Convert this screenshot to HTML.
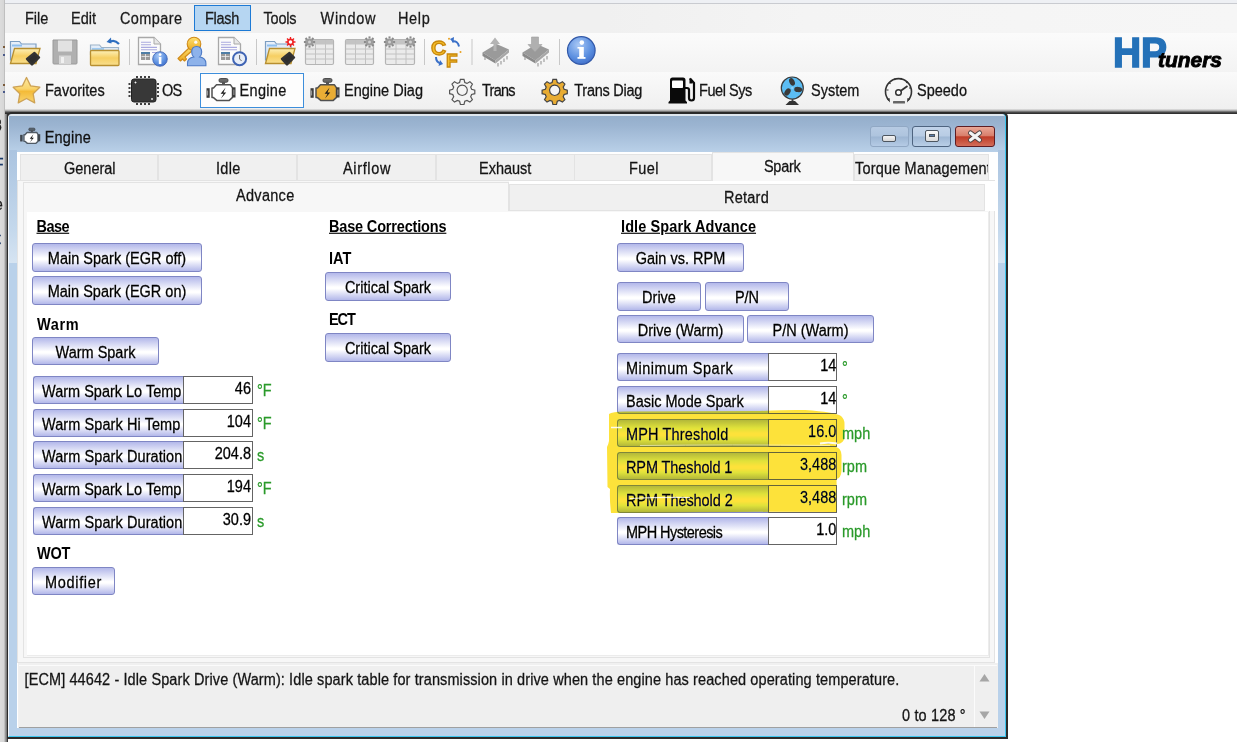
<!DOCTYPE html>
<html><head><meta charset="utf-8">
<style>
*{box-sizing:border-box;margin:0;padding:0}
html,body{width:1237px;height:742px;overflow:hidden;background:#fff;font-family:"Liberation Sans",sans-serif;font-size:14.5px;color:#000}
.t,.bt{-webkit-text-stroke:0.25px currentColor;transform:scaleY(1.12);transform-origin:50% 49%}
.b{-webkit-text-stroke:0}
.a{position:absolute}
.t{position:absolute;white-space:nowrap;line-height:1}
#leftstrip{left:0;top:0;width:8px;height:742px;background:linear-gradient(90deg,#dcdcdc 0,#d6d6d6 4px,#a8a8a8 5px,#7a7a7a 6.5px,#3a3a3a 7.5px,#2a2a2a 8px)}
#topstrip{left:5px;top:0;width:1232px;height:4px;background:#eef0f4;border-bottom:1px solid #c9cbd0}
#menubar{left:5px;top:4px;width:1232px;height:29px;background:linear-gradient(90deg,#f0f0f0 0,#f0f0f0 600px,#f4f4f4 800px,#f6f6f6 1232px)}
#tb1{left:5px;top:33px;width:1232px;height:39px;background:linear-gradient(#fbfbfb,#f3f3f3)}
#tb2{left:5px;top:72px;width:1232px;height:39px;background:linear-gradient(#fafafa,#efefef)}
#shadow{left:5px;top:109px;width:1232px;height:5px;background:linear-gradient(#e8e8e8,#b0b0b0 30%,#5a5a5a 60%,#333 80%,#2e2e2e)}
.menu{top:10.8px;font-size:14.5px;color:#1a1a1a}
.b{font-weight:bold}
.u{text-decoration:underline}
/* window */
#win{left:7px;top:112px;width:1001px;height:627px;background:#2a2a2a;border-radius:5px 5px 0 0}
#frame{left:8px;top:114px;width:998px;height:623px;border-radius:4px 4px 0 0;background:#b9d1ea;border-left:1px solid #f4f8fc;border-right:1px solid #3cc6ef;border-bottom:1px solid #3cc6ef}
#title{left:9px;top:114px;width:996px;height:38px;border-radius:4px 4px 0 0;background:linear-gradient(#dfe7ef 0,#dfe7ef 1.5px,#94aecb 2px,#9bb4d1 30%,#b9d0e8 100%)}
.btn{position:absolute;border:1px solid #7f86c4;border-radius:3px;background:linear-gradient(#b3b8ea 0%,#fff 52%,#fff 58%,#b3b8ea 100%);text-align:center;line-height:26px;white-space:nowrap}
.tab{background:#f0f0f0;border:1px solid #e3e3e3;border-bottom:none}
.tabt{color:#141414}
.bt{position:absolute;left:0;right:0;white-space:nowrap;line-height:1}
.row{position:absolute;height:28px}
.row .lab{position:absolute;left:0;top:0;height:28px;border:1px solid #7f86c4;border-right:none;border-radius:3px 0 0 3px;background:linear-gradient(#b3b8ea 0%,#fff 52%,#fff 58%,#b3b8ea 100%);line-height:26px;padding-left:8px;white-space:nowrap;overflow:hidden}
.row .val{position:absolute;top:0;height:28px;border:1px solid #646464;background:#fff;text-align:right;padding-right:3px;line-height:22px}
.unit{color:#2a9a2a}
.tbt{color:#141414}
</style></head><body>
<div id="leftstrip" class="a"></div>
<div id="topstrip" class="a"></div>
<div id="menubar" class="a"></div>
<div id="tb1" class="a"></div>
<div id="tb2" class="a"></div>
<div id="shadow" class="a"></div>

<!-- ICONS -->
<svg class="a" style="left:0;top:0" width="1237" height="112" viewBox="0 0 1237 112">
<defs>
<linearGradient id="fy" x1="0" y1="0" x2="0" y2="1"><stop offset="0" stop-color="#fdf0b8"/><stop offset="0.5" stop-color="#f6cf62"/><stop offset="1" stop-color="#f9df8e"/></linearGradient>
<linearGradient id="fb" x1="0" y1="0" x2="0" y2="1"><stop offset="0" stop-color="#e9f1fb"/><stop offset="1" stop-color="#c7daf0"/></linearGradient>
<radialGradient id="ib" cx="0.4" cy="0.3" r="0.8"><stop offset="0" stop-color="#a9c8f5"/><stop offset="0.6" stop-color="#5b8fe0"/><stop offset="1" stop-color="#3c68c4"/></radialGradient>
<linearGradient id="gk" x1="0" y1="0" x2="0" y2="1"><stop offset="0" stop-color="#fde070"/><stop offset="1" stop-color="#eaa820"/></linearGradient>
<linearGradient id="star" x1="0" y1="0" x2="0" y2="1"><stop offset="0" stop-color="#fde9a0"/><stop offset="0.45" stop-color="#f9d36a"/><stop offset="0.55" stop-color="#f4bb38"/><stop offset="1" stop-color="#f8d470"/></linearGradient>
</defs>
<!-- open folder -->
<path d="M10.5 41.5 h9 l2 2.5 h14.5 v16 h-25.5z" fill="url(#fb)" stroke="#7d9ec2" stroke-width="1.2"/>
<rect x="12" y="44.5" width="10" height="2" fill="#8fc0f0"/>
<path d="M10.5 63.5 L14.5 48.5 H40 L36 63.5 Z" fill="url(#fy)" stroke="#b78f30" stroke-width="1.3"/>
<path d="M27 59 L34.5 53 L39 57.5 L32 64.5 Z" fill="#2e2e2e" stroke="#333" stroke-width="2.4" stroke-linejoin="round"/>
<!-- floppy -->
<path d="M53 40 h24 v23 q0 1 -1 1 h-22 q-1 0 -1 -1 z" fill="#b0b0b0" stroke="#9a9a9a"/>
<rect x="58" y="40.5" width="14" height="11" fill="#e2e2e2"/>
<rect x="59" y="55.5" width="12" height="8.5" fill="#d6d6d6"/>
<rect x="61" y="57" width="3" height="6" fill="#f0f0f0"/>
<!-- folder up -->
<path d="M90.5 45 h9 l2 2.5 h17 v7 h-28z" fill="url(#fb)" stroke="#9bb2c8" stroke-width="1.2"/>
<rect x="92" y="48" width="12" height="2" fill="#9fcaf2"/>
<rect x="90.5" y="50.5" width="28.5" height="15" rx="1" fill="url(#fy)" stroke="#b78f30" stroke-width="1.3"/>
<path d="M109 42.5 q5 -4 10 1.5" fill="none" stroke="#2f6fc0" stroke-width="2.2"/>
<path d="M106.5 42 l4.5 -4.5 l0.5 6z" fill="#2f6fc0"/>
<!-- sep -->
<rect x="129" y="39" width="1" height="26" fill="#c8c8c8"/>
<!-- doc info -->
<path d="M138.5 37.5 h15.5 l6.5 6.5 v20.5 h-22z" fill="#fbfbfb" stroke="#a8a8a8" stroke-width="1.3"/>
<path d="M154 37.5 v6.5 h6.5" fill="#e8e8e8" stroke="#a8a8a8" stroke-width="1"/>
<g stroke="#aaaae0" stroke-width="1.1"><path d="M141 42.3h10M141 44.7h10M141 47.4h16M141 49.7h16M152 52.5h5"/></g>
<rect x="141" y="52" width="9" height="8" fill="#9a9a9a"/><rect x="141" y="52" width="9" height="2" fill="#4f7ea6"/>
<path d="M141.5 56.5h8M145.5 54v6" stroke="#eee" stroke-width="0.8"/>
<circle cx="160" cy="59" r="7.3" fill="url(#ib)" stroke="#3b60b0" stroke-width="0.8"/>
<rect x="158.8" y="57" width="2.6" height="7" fill="#fff"/><circle cx="160.1" cy="54.6" r="1.4" fill="#fff"/>
<!-- key user -->
<path d="M189.5 47.5 L178 58.5 L180.5 61 L182.5 59 L184.5 61 L186.5 59 L185 57 L193 50" fill="url(#gk)" stroke="#d08a18" stroke-width="1.1" stroke-linejoin="round"/>
<circle cx="194" cy="44" r="6.8" fill="url(#gk)" stroke="#d08a18" stroke-width="1.1"/>
<circle cx="195.8" cy="42.2" r="1.6" fill="#f8f8f8"/>
<path d="M196.5 46.5 c-3.2 0 -4.8 2.6 -4.8 5.6 c0 2.2 0.8 3.8 2 4.8 c-4 0.8 -6.2 3 -6.2 6.6 v2.2 h18.4 v-2.2 c0 -3.6 -2.2 -5.8 -6.2 -6.6 c1.2 -1 2 -2.6 2 -4.8 c0 -3 -1.6 -5.6 -5.2 -5.6z" fill="#8db2ea" stroke="#4c7ac6" stroke-width="1.1"/>
<!-- doc clock -->
<path d="M218.5 37.5 h15.5 l6.5 6.5 v20.5 h-22z" fill="#fbfbfb" stroke="#a8a8a8" stroke-width="1.3"/>
<path d="M234 37.5 v6.5 h6.5" fill="#e8e8e8" stroke="#a8a8a8" stroke-width="1"/>
<g stroke="#aaaae0" stroke-width="1.1"><path d="M221 42.3h10M221 44.7h10M221 47.4h16M221 49.7h16"/></g>
<rect x="221" y="52" width="9" height="8" fill="#9a9a9a"/><rect x="221" y="52" width="9" height="2" fill="#4f7ea6"/>
<path d="M221.5 56.5h8M225.5 54v6" stroke="#eee" stroke-width="0.8"/>
<circle cx="239.6" cy="58.7" r="6.5" fill="#e8eef8" stroke="#3f64b4" stroke-width="2"/>
<path d="M239.6 55 v4 l2 2" stroke="#555" stroke-width="0.9" fill="none"/>
<!-- sep -->
<rect x="256" y="39" width="1" height="26" fill="#c8c8c8"/>
<!-- folder open red -->
<path d="M265.5 41.5 h9 l2 2.5 h14.5 v16 h-25.5z" fill="url(#fb)" stroke="#7d9ec2" stroke-width="1.2"/>
<rect x="267" y="44.5" width="10" height="2" fill="#8fc0f0"/>
<path d="M265.5 63.5 L269.5 48.5 H295 L291 63.5 Z" fill="url(#fy)" stroke="#b78f30" stroke-width="1.3"/>
<path d="M282 59 L289.5 53 L294 57.5 L287 64.5 Z" fill="#2e2e2e" stroke="#333" stroke-width="2.4" stroke-linejoin="round"/>
<path d="M290.5 37 v10 M285.5 42 h10 M287 38.5 l7 7 M294 38.5 l-7 7" stroke="#f02020" stroke-width="1.3"/>
<circle cx="290.5" cy="42" r="2.6" fill="#fff" stroke="#f02020" stroke-width="1.6"/>
<!-- tables -->
<g fill="#ebebeb" stroke="#b4b4b4" stroke-width="1.2">
<rect x="305.5" y="39.5" width="28" height="25" rx="1.5"/>
<rect x="345.5" y="39.5" width="28" height="25" rx="1.5"/>
<rect x="385.5" y="39.5" width="29" height="25" rx="1.5"/>
</g>
<g fill="#c4c4c4"><rect x="306" y="40" width="27" height="4.5"/><rect x="346" y="40" width="27" height="4.5"/><rect x="386" y="40" width="28" height="4.5"/></g>
<g stroke="#c2c2c2" stroke-width="1"><path d="M306 49h27M306 54h27M306 59h27M315.5 40v24M325.5 40v24"/><path d="M346 49h27M346 54h27M346 59h27M355.5 40v24M365.5 40v24"/><path d="M386 49h28M386 54h28M386 59h28M396 40v24M406 40v24"/></g>
<circle cx="309.5" cy="42" r="3.6" fill="#9c9c9c"/><rect x="313.10" y="41.00" width="2" height="2" fill="#8a8a8a" transform="rotate(0 314.10 42.00)"/><rect x="311.75" y="44.25" width="2" height="2" fill="#8a8a8a" transform="rotate(45 312.75 45.25)"/><rect x="308.50" y="45.60" width="2" height="2" fill="#8a8a8a" transform="rotate(90 309.50 46.60)"/><rect x="305.25" y="44.25" width="2" height="2" fill="#8a8a8a" transform="rotate(135 306.25 45.25)"/><rect x="303.90" y="41.00" width="2" height="2" fill="#8a8a8a" transform="rotate(180 304.90 42.00)"/><rect x="305.25" y="37.75" width="2" height="2" fill="#8a8a8a" transform="rotate(225 306.25 38.75)"/><rect x="308.50" y="36.40" width="2" height="2" fill="#8a8a8a" transform="rotate(270 309.50 37.40)"/><rect x="311.75" y="37.75" width="2" height="2" fill="#8a8a8a" transform="rotate(315 312.75 38.75)"/><circle cx="309.5" cy="42" r="1.5" fill="#d0d0d0"/><circle cx="369.5" cy="42" r="3.6" fill="#9c9c9c"/><rect x="373.10" y="41.00" width="2" height="2" fill="#8a8a8a" transform="rotate(0 374.10 42.00)"/><rect x="371.75" y="44.25" width="2" height="2" fill="#8a8a8a" transform="rotate(45 372.75 45.25)"/><rect x="368.50" y="45.60" width="2" height="2" fill="#8a8a8a" transform="rotate(90 369.50 46.60)"/><rect x="365.25" y="44.25" width="2" height="2" fill="#8a8a8a" transform="rotate(135 366.25 45.25)"/><rect x="363.90" y="41.00" width="2" height="2" fill="#8a8a8a" transform="rotate(180 364.90 42.00)"/><rect x="365.25" y="37.75" width="2" height="2" fill="#8a8a8a" transform="rotate(225 366.25 38.75)"/><rect x="368.50" y="36.40" width="2" height="2" fill="#8a8a8a" transform="rotate(270 369.50 37.40)"/><rect x="371.75" y="37.75" width="2" height="2" fill="#8a8a8a" transform="rotate(315 372.75 38.75)"/><circle cx="369.5" cy="42" r="1.5" fill="#d0d0d0"/><circle cx="389.5" cy="42" r="3.6" fill="#9c9c9c"/><rect x="393.10" y="41.00" width="2" height="2" fill="#8a8a8a" transform="rotate(0 394.10 42.00)"/><rect x="391.75" y="44.25" width="2" height="2" fill="#8a8a8a" transform="rotate(45 392.75 45.25)"/><rect x="388.50" y="45.60" width="2" height="2" fill="#8a8a8a" transform="rotate(90 389.50 46.60)"/><rect x="385.25" y="44.25" width="2" height="2" fill="#8a8a8a" transform="rotate(135 386.25 45.25)"/><rect x="383.90" y="41.00" width="2" height="2" fill="#8a8a8a" transform="rotate(180 384.90 42.00)"/><rect x="385.25" y="37.75" width="2" height="2" fill="#8a8a8a" transform="rotate(225 386.25 38.75)"/><rect x="388.50" y="36.40" width="2" height="2" fill="#8a8a8a" transform="rotate(270 389.50 37.40)"/><rect x="391.75" y="37.75" width="2" height="2" fill="#8a8a8a" transform="rotate(315 392.75 38.75)"/><circle cx="389.5" cy="42" r="1.5" fill="#d0d0d0"/><circle cx="410.5" cy="42" r="3.6" fill="#9c9c9c"/><rect x="414.10" y="41.00" width="2" height="2" fill="#8a8a8a" transform="rotate(0 415.10 42.00)"/><rect x="412.75" y="44.25" width="2" height="2" fill="#8a8a8a" transform="rotate(45 413.75 45.25)"/><rect x="409.50" y="45.60" width="2" height="2" fill="#8a8a8a" transform="rotate(90 410.50 46.60)"/><rect x="406.25" y="44.25" width="2" height="2" fill="#8a8a8a" transform="rotate(135 407.25 45.25)"/><rect x="404.90" y="41.00" width="2" height="2" fill="#8a8a8a" transform="rotate(180 405.90 42.00)"/><rect x="406.25" y="37.75" width="2" height="2" fill="#8a8a8a" transform="rotate(225 407.25 38.75)"/><rect x="409.50" y="36.40" width="2" height="2" fill="#8a8a8a" transform="rotate(270 410.50 37.40)"/><rect x="412.75" y="37.75" width="2" height="2" fill="#8a8a8a" transform="rotate(315 413.75 38.75)"/><circle cx="410.5" cy="42" r="1.5" fill="#d0d0d0"/>
<!-- sep -->
<rect x="424" y="39" width="1" height="26" fill="#c8c8c8"/>
<!-- C/F -->
<text x="431" y="55" font-family="Liberation Sans" font-weight="bold" font-size="21" fill="#f5bd2a" stroke="#c8880c" stroke-width="1.3">C</text>
<text x="446" y="67" font-family="Liberation Sans" font-weight="bold" font-size="19" fill="#f5bd2a" stroke="#c8880c" stroke-width="1.3">F</text>
<path d="M452 41.5 q6 -1 7 5" fill="none" stroke="#3a70c8" stroke-width="2"/><path d="M450 39 l4 -2 l-0.5 6z" fill="#3a70c8"/>
<path d="M436 57 q0 5 4.5 6.5" fill="none" stroke="#3a70c8" stroke-width="2"/><path d="M440 60 l3 4 l-4.5 2z" fill="#3a70c8"/>
<circle cx="449" cy="38.8" r="1" fill="#e8a020"/><circle cx="460.5" cy="52" r="1" fill="#e8a020"/>
<!-- sep -->
<rect x="471.5" y="39" width="1" height="26" fill="#c8c8c8"/>
<!-- chips -->
<g id="chipA">
<path d="M482.5 52.5 L496.5 44 L509 49.5 L495.5 60.5 Z" fill="#9a9a9a"/>
<path d="M482.5 52.5 L482.5 56 L495.5 63.5 L495.5 60.5 Z" fill="#8a8a8a"/>
<path d="M495.5 60.5 L495.5 63.5 L509 52.5 L509 49.5 Z" fill="#a6a6a6"/>
<g stroke="#a0a0a0" stroke-width="1.2"><path d="M485 57 v3 M498 63 l0 3.5 M501 61 v3.5 M504 58.5 v3.5 M507 56 v3.5"/></g>
</g>
<path d="M493.5 51 v-7 h-3.5 l5 -6.5 l5 6.5 h-3.5 v7z" fill="#b4b4b4"/>
<g>
<path d="M522.5 52.5 L536.5 44 L549 49.5 L535.5 60.5 Z" fill="#9a9a9a"/>
<path d="M522.5 52.5 L522.5 56 L535.5 63.5 L535.5 60.5 Z" fill="#8a8a8a"/>
<path d="M535.5 60.5 L535.5 63.5 L549 52.5 L549 49.5 Z" fill="#a6a6a6"/>
<g stroke="#a0a0a0" stroke-width="1.2"><path d="M525 57 v3 M538 63 l0 3.5 M541 61 v3.5 M544 58.5 v3.5 M547 56 v3.5"/></g>
</g>
<path d="M531.5 37 h7 v7.5 h3.5 l-7 7.5 l-7 -7.5 h3.5z" fill="#b0b0b0" stroke="#a0a0a0" stroke-width="0.6"/>
<!-- sep -->
<rect x="559" y="39" width="1" height="26" fill="#c8c8c8"/>
<!-- info -->
<circle cx="581.3" cy="50.5" r="13.8" fill="url(#ib)" stroke="#3158a8" stroke-width="1.2"/>
<rect x="579.2" y="47" width="4.6" height="11" fill="#fff"/><rect x="577.5" y="57" width="8" height="1.8" fill="#fff"/><rect x="577.5" y="47" width="3.5" height="1.6" fill="#fff"/>
<circle cx="581.8" cy="42.6" r="2.3" fill="#fff"/>
<!-- HPtuners -->
<text x="1113" y="67" font-family="Liberation Sans" font-weight="bold" font-size="42" fill="#2471b8" stroke="#2471b8" stroke-width="1.6" textLength="54" lengthAdjust="spacingAndGlyphs">HP</text>
<text x="1158" y="67" font-family="Liberation Sans" font-weight="bold" font-style="italic" font-size="21" fill="#000" stroke="#000" stroke-width="0.9" textLength="64" lengthAdjust="spacingAndGlyphs">tuners</text>

<!-- toolbar 2 -->
<rect x="200.5" y="73.5" width="103" height="34" fill="#fdfdfd" stroke="#3d8edb" stroke-width="1"/>
<path d="M26.50 77.50 L30.61 85.84 L39.81 87.17 L33.16 93.66 L34.73 102.83 L26.50 98.50 L18.27 102.83 L19.84 93.66 L13.19 87.17 L22.39 85.84Z" fill="url(#star)" stroke="#cda255" stroke-width="1.3" stroke-linejoin="round"/>
<!-- chip -->
<rect x="131.5" y="79" width="24.5" height="23" rx="2.5" fill="#383838" stroke="#202020"/>
<g fill="#404040"><rect x="136" y="76" width="2" height="2"/><rect x="140" y="76" width="2" height="2"/><rect x="144" y="76" width="2" height="2"/><rect x="148" y="76" width="2" height="2"/>
<rect x="136" y="103" width="2" height="2"/><rect x="140" y="103" width="2" height="2"/><rect x="144" y="103" width="2" height="2"/><rect x="148" y="103" width="2" height="2"/>
<rect x="128.5" y="83" width="2" height="2"/><rect x="128.5" y="87" width="2" height="2"/><rect x="128.5" y="91" width="2" height="2"/><rect x="128.5" y="95" width="2" height="2"/>
<rect x="157" y="83" width="2" height="2"/><rect x="157" y="87" width="2" height="2"/><rect x="157" y="91" width="2" height="2"/><rect x="157" y="95" width="2" height="2"/></g>
<path d="M134.5 82.5 l2 0 M135.5 81.5 v2 M151 99 h2 M152 98 v2" stroke="#fff" stroke-width="0.8"/>
<!-- engine icons -->
<g transform="translate(0,0)">
<rect x="219" y="78.5" width="9" height="3.8" rx="1.6" fill="#6a6a6a" stroke="#444" stroke-width="0.9"/>
<rect x="222" y="82" width="3" height="3" fill="#555"/>
<path d="M216.5 84.8 h14 l2 3 v9.6 l-3.5 3.2 h-12 l-3.5 -3 h-1.5 v-9.6 h1.5z" fill="#ffffff" stroke="#505050" stroke-width="1.5" stroke-linejoin="round"/>
<path d="M206.5 88.2 h3.2 v9.6 h-3.2z" fill="#3a3a3a"/><path d="M207.6 90.5 v5" stroke="#bbb" stroke-width="0.8"/>
<path d="M232.3 87.3 h3.2 v10.2 h-3.2z" fill="#3a3a3a"/><path d="M233.9 89.5 v5.5" stroke="#bbb" stroke-width="0.8"/>
<path d="M225.6 87.6 l-5 6.2 h3 l-2.6 4.8 l5.2 -6.1 h-2.8z" fill="#1a1a1a"/>
</g>
<g transform="translate(104,0)">
<rect x="219" y="78.5" width="9" height="3.8" rx="1.6" fill="#6a6a6a" stroke="#444" stroke-width="0.9"/>
<rect x="222" y="82" width="3" height="3" fill="#555"/>
<path d="M216.5 84.8 h14 l2 3 v9.6 l-3.5 3.2 h-12 l-3.5 -3 h-1.5 v-9.6 h1.5z" fill="#e9ad35" stroke="#505050" stroke-width="1.5" stroke-linejoin="round"/>
<path d="M206.5 88.2 h3.2 v9.6 h-3.2z" fill="#3a3a3a"/><path d="M207.6 90.5 v5" stroke="#bbb" stroke-width="0.8"/>
<path d="M232.3 87.3 h3.2 v10.2 h-3.2z" fill="#3a3a3a"/><path d="M233.9 89.5 v5.5" stroke="#bbb" stroke-width="0.8"/>
<path d="M225.6 87.6 l-5 6.2 h3 l-2.6 4.8 l5.2 -6.1 h-2.8z" fill="#1a1a1a"/>
</g>
<!-- gears -->
<g transform="translate(462.2,90.3)"><path id="gear" d="M-1.8 -11 h3.6 l0.8 3.2 l2.2 0.9 l2.9 -1.7 l2.5 2.5 l-1.7 2.9 l0.9 2.2 l3.2 0.8 v3.6 l-3.2 0.8 l-0.9 2.2 l1.7 2.9 l-2.5 2.5 l-2.9 -1.7 l-2.2 0.9 l-0.8 3.2 h-3.6 l-0.8 -3.2 l-2.2 -0.9 l-2.9 1.7 l-2.5 -2.5 l1.7 -2.9 l-0.9 -2.2 l-3.2 -0.8 v-3.6 l3.2 -0.8 l0.9 -2.2 l-1.7 -2.9 l2.5 -2.5 l2.9 1.7 l2.2 -0.9z M0 -5.2 a5.2 5.2 0 1 0 0.01 0z" fill="#f4f4f4" stroke="#555" stroke-width="1.2" fill-rule="evenodd"/></g>
<g transform="translate(554.7,90.3)"><path d="M-1.8 -11 h3.6 l0.8 3.2 l2.2 0.9 l2.9 -1.7 l2.5 2.5 l-1.7 2.9 l0.9 2.2 l3.2 0.8 v3.6 l-3.2 0.8 l-0.9 2.2 l1.7 2.9 l-2.5 2.5 l-2.9 -1.7 l-2.2 0.9 l-0.8 3.2 h-3.6 l-0.8 -3.2 l-2.2 -0.9 l-2.9 1.7 l-2.5 -2.5 l1.7 -2.9 l-0.9 -2.2 l-3.2 -0.8 v-3.6 l3.2 -0.8 l0.9 -2.2 l-1.7 -2.9 l2.5 -2.5 l2.9 1.7 l2.2 -0.9z M0 -5.2 a5.2 5.2 0 1 0 0.01 0z" fill="#e8ac33" stroke="#444" stroke-width="1.2" fill-rule="evenodd"/></g>
<!-- fuel pump -->
<path d="M668.5 103.5 v-1.5 l1.5 -1.5 v-20.5 q0 -2.5 2.5 -2.5 h10.5 q2.5 0 2.5 2.5 v20.5 l1.5 1.5 v1.5z" fill="#0a0a0a"/>
<rect x="672" y="80.5" width="11" height="7.5" rx="0.8" fill="#fff"/>
<path d="M685 88 h2 q2 0 2 2 v8 q0 2.5 2.5 2.5 q2.5 0 2.5 -2.5 v-15 l-4 -4.5" fill="none" stroke="#0a0a0a" stroke-width="2.2"/>
<path d="M689.5 78 l3 2.5 v3 l-3 0 z" fill="#0a0a0a"/>
<!-- fan -->
<circle cx="792.3" cy="88" r="11" fill="#5bbdf4" stroke="#3a3a3a" stroke-width="1.2"/>
<g fill="#3a3a3a">
<ellipse cx="792" cy="81.8" rx="2.6" ry="4" transform="rotate(-25 792 81.8)"/>
<ellipse cx="798.2" cy="89.5" rx="2.6" ry="4" transform="rotate(95 798.2 89.5)"/>
<ellipse cx="787.5" cy="92" rx="2.6" ry="4" transform="rotate(215 787.5 92)"/>
</g>
<circle cx="792.3" cy="88" r="1.2" fill="#8fd0f8"/>
<path d="M791.5 99 h2 v2.5 h-2z" fill="#444"/><path d="M785.5 105 l4 -4 h5.5 l4 4z" fill="#333"/>
<!-- speedo -->
<path d="M889 100.5 A13 13 0 1 1 908 100.5" fill="none" stroke="#333" stroke-width="1.6"/>
<g stroke="#333" stroke-width="1.2"><path d="M886.5 90 h2 M889 82.5 l1.5 1.2 M894.5 78.5 l0.6 1.6 M901.5 78 l-0.5 1.7 M907.5 81.5 l-1.3 1.3 M911 88 h-2"/></g>
<path d="M887 99 l3 3.5 l-0.5 -4.5z M910 99 l-3 3.5 l0.5 -4.5z" fill="#333"/>
<circle cx="898.5" cy="92.5" r="2.8" fill="#fff" stroke="#333" stroke-width="1.5"/>
<path d="M900.5 91 l7 -5" stroke="#333" stroke-width="1.8"/>
<rect x="893" y="101" width="12" height="2.5" rx="0.5" fill="#666"/>
</svg>
<!-- /ICONS -->
<!-- TB2TEXT -->
<div class="t tbt" style="left:45px;top:83px">Favorites</div>
<div class="t tbt" style="left:162px;top:83px;letter-spacing:-0.8px">OS</div>
<div class="t tbt" style="left:239.6px;top:83px;letter-spacing:0.3px">Engine</div>
<div class="t tbt" style="left:344px;top:83px">Engine Diag</div>
<div class="t tbt" style="left:482px;top:83px;letter-spacing:-0.75px">Trans</div>
<div class="t tbt" style="left:574.3px;top:83px;letter-spacing:-0.25px">Trans Diag</div>
<div class="t tbt" style="left:699px;top:83px;letter-spacing:-0.45px">Fuel Sys</div>
<div class="t tbt" style="left:811px;top:83px">System</div>
<div class="t tbt" style="left:917px;top:83px">Speedo</div>
<!-- /TB2TEXT -->
<!-- menu -->
<div class="t menu" style="left:25px">File</div>
<div class="t menu" style="left:71px">Edit</div>
<div class="t menu" style="left:120px;letter-spacing:0.4px">Compare</div>
<div class="a" style="left:194px;top:5px;width:57px;height:26px;background:#b6d6f2;border:1px solid #1d7ad5"></div>
<div class="t menu" style="left:205px;letter-spacing:-0.3px">Flash</div>
<div class="t menu" style="left:263.5px;letter-spacing:-0.2px">Tools</div>
<div class="t menu" style="left:320.5px;letter-spacing:0.7px">Window</div>
<div class="t menu" style="left:398px;letter-spacing:0.65px">Help</div>


<!-- window -->
<div id="win" class="a"></div>
<div id="frame" class="a"></div>
<div id="title" class="a"></div>
<div class="a" style="left:9px;top:150px;width:8px;height:113px;background:linear-gradient(#abc4e0,#c4d8ec 70%,#d6e4f2 100%)"></div>
<div class="a" style="left:998px;top:150px;width:7px;height:113px;background:linear-gradient(#abc4e0,#c4d8ec 70%,#d6e4f2 100%)"></div>

<div class="t" style="left:44.7px;top:130px;font-size:14.5px;color:#101010;letter-spacing:0.2px">Engine</div>
<!-- caption buttons -->
<div class="a" style="left:870px;top:126px;width:39px;height:21px;border:1px solid #91a8c4;border-radius:3px;background:linear-gradient(#b7cbe3 0%,#aec4de 48%,#9db6d3 52%,#b5cbe5 100%)"></div>
<div class="a" style="left:882px;top:135px;width:14px;height:7px;border:1px solid #4d5660;border-radius:2px;background:linear-gradient(#f4f4f4,#d8d8d8)"></div>
<div class="a" style="left:912px;top:126px;width:39px;height:21px;border:1px solid #4e6480;border-radius:3px;background:linear-gradient(#c2d4ea 0%,#b8cce4 48%,#9fb8d5 52%,#b9cee6 100%)"></div>
<div class="a" style="left:925px;top:130px;width:14px;height:12px;border:1px solid #4d5660;border-radius:2px;background:linear-gradient(#fafafa,#dcdcdc)"></div>
<div class="a" style="left:929px;top:134px;width:6px;height:3px;border:1px solid #4d5660;background:#5a7ca8"></div>
<div class="a" style="left:955px;top:126px;width:40px;height:21px;border:1px solid #5e1c22;border-radius:3px;background:linear-gradient(#e9a797 0%,#d9806c 45%,#bf3d28 52%,#d36d5a 100%)"></div>
<svg class="a" style="left:965px;top:129px" width="20" height="15" viewBox="0 0 20 15"><path d="M5.5 4 L14.5 11 M14.5 4 L5.5 11" stroke="#4a4040" stroke-width="5" stroke-linecap="round"/><path d="M5.5 4 L14.5 11 M14.5 4 L5.5 11" stroke="#f4f4f4" stroke-width="3.2" stroke-linecap="round"/></svg>

<!-- tab control -->
<div class="a" style="left:17px;top:152px;width:981px;height:511px;background:#fff"></div>
<div class="a" style="left:17px;top:180px;width:978px;height:483px;background:#f7f7f7;border:1px solid #e3e3e3"></div>
<!-- row1 tabs -->
<div class="a tab" style="left:20px;top:154px;width:138px;height:26px"></div>
<div class="a tab" style="left:158px;top:154px;width:139px;height:26px"></div>
<div class="a tab" style="left:297px;top:154px;width:139px;height:26px"></div>
<div class="a tab" style="left:436px;top:154px;width:139px;height:26px"></div>
<div class="a tab" style="left:574px;top:154px;width:138px;height:26px"></div>
<div class="a" style="left:712px;top:152px;width:142px;height:29px;background:#f7f7f7;border:1px solid #e3e3e3;border-bottom:none"></div>
<div class="a tab" style="left:854px;top:154px;width:135px;height:26px"></div>
<div class="t tabt" style="left:64px;top:161px">General</div>
<div class="t tabt" style="left:216px;top:161px;letter-spacing:0.3px">Idle</div>
<div class="t tabt" style="left:343px;top:161px;letter-spacing:0.65px">Airflow</div>
<div class="t tabt" style="left:479px;top:161px">Exhaust</div>
<div class="t tabt" style="left:629px;top:161px;letter-spacing:0.4px">Fuel</div>
<div class="t tabt" style="left:764px;top:159px;letter-spacing:-0.3px">Spark</div>
<div class="a" style="left:855px;top:158px;width:133px;height:20px;overflow:hidden"><div class="t tabt" style="left:0;top:3px;letter-spacing:0.18px">Torque Management</div></div>
<!-- row2 tabs -->
<div class="a" style="left:23px;top:182px;width:486px;height:31px;background:#f7f7f7;border:1px solid #e3e3e3;border-bottom:none"></div>
<div class="a" style="left:509px;top:181px;width:480px;height:4px;background:#fff"></div>
<div class="a" style="left:509px;top:184px;width:476px;height:27px;background:#f0f0f0;border:1px solid #e3e3e3"></div>
<div class="t tabt" style="left:236px;top:188px;letter-spacing:0.3px">Advance</div>
<div class="t tabt" style="left:724px;top:190px;letter-spacing:0.24px">Retard</div>
<!-- content -->
<div class="a" style="left:23px;top:211px;width:967px;height:447px;background:#f7f7f7;border:1px solid #e3e3e3;border-top:none"></div>
<div class="a" style="left:27px;top:212px;width:962px;height:444px;background:#fff;border-right:1px solid #ececec;border-bottom:1px solid #ececec"></div>
<div class="a" style="left:985px;top:181px;width:12px;height:30px;background:#fff"></div>

<!-- CONTENT -->
<div class="t b u" style="left:36.5px;top:219px;letter-spacing:-0.5px">Base</div>
<div class="btn" style="left:32px;top:243px;width:170px;height:29px"><span class="bt" style="top:7px">Main Spark (EGR off)</span></div>
<div class="btn" style="left:32px;top:276px;width:170px;height:29px"><span class="bt" style="top:7px">Main Spark (EGR on)</span></div>
<div class="t b" style="left:37px;top:317px;letter-spacing:0.6px">Warm</div>
<div class="btn" style="left:32px;top:337px;width:127px;height:28px"><span class="bt" style="top:7px">Warm Spark</span></div>
<div class="row" style="left:33px;top:376px;width:220px;height:28px"><div class="lab" style="width:151px;height:28px"><span class="bt" style="left:8px;top:7px">Warm Spark Lo Temp</span></div><div class="val" style="left:150px;width:70px;height:28px"><span class="t" style="right:1px;top:3.5px">46</span></div></div><div class="t unit" style="left:257px;top:383px">°F</div>
<div class="row" style="left:33px;top:409px;width:220px;height:28px"><div class="lab" style="width:151px;height:28px"><span class="bt" style="left:8px;top:7px;letter-spacing:0.08px">Warm Spark Hi Temp</span></div><div class="val" style="left:150px;width:70px;height:28px"><span class="t" style="right:1px;top:3.5px">104</span></div></div><div class="t unit" style="left:257px;top:416px">°F</div>
<div class="row" style="left:33px;top:441px;width:220px;height:28px"><div class="lab" style="width:151px;height:28px"><span class="bt" style="left:8px;top:7px;letter-spacing:0.08px">Warm Spark Duration</span></div><div class="val" style="left:150px;width:70px;height:28px"><span class="t" style="right:1px;top:3.5px">204.8</span></div></div><div class="t unit" style="left:257px;top:448px">s</div>
<div class="row" style="left:33px;top:474px;width:220px;height:28px"><div class="lab" style="width:151px;height:28px"><span class="bt" style="left:8px;top:7px">Warm Spark Lo Temp</span></div><div class="val" style="left:150px;width:70px;height:28px"><span class="t" style="right:1px;top:3.5px">194</span></div></div><div class="t unit" style="left:257px;top:481px">°F</div>
<div class="row" style="left:33px;top:507px;width:220px;height:28px"><div class="lab" style="width:151px;height:28px"><span class="bt" style="left:8px;top:7px;letter-spacing:0.08px">Warm Spark Duration</span></div><div class="val" style="left:150px;width:70px;height:28px"><span class="t" style="right:1px;top:3.5px">30.9</span></div></div><div class="t unit" style="left:257px;top:514px">s</div>
<div class="t b" style="left:37px;top:546px;letter-spacing:-0.25px">WOT</div>
<div class="btn" style="left:32px;top:567px;width:83px;height:28px"><span class="bt" style="top:7px;letter-spacing:0.7px">Modifier</span></div>
<div class="t b u" style="left:329px;top:219px;letter-spacing:-0.17px">Base Corrections</div>
<div class="t b" style="left:329px;top:251px">IAT</div>
<div class="btn" style="left:325px;top:272px;width:126px;height:29px"><span class="bt" style="top:7px">Critical Spark</span></div>
<div class="t b" style="left:329px;top:312px;letter-spacing:-1.1px">ECT</div>
<div class="btn" style="left:325px;top:333px;width:126px;height:29px"><span class="bt" style="top:7px">Critical Spark</span></div>
<div class="t b u" style="left:621px;top:219px;letter-spacing:0.1px">Idle Spark Advance</div>
<div class="btn" style="left:617px;top:243px;width:127px;height:29px"><span class="bt" style="top:7px">Gain vs. RPM</span></div>
<div class="btn" style="left:617px;top:282px;width:84px;height:29px"><span class="bt" style="top:7px">Drive</span></div>
<div class="btn" style="left:705px;top:282px;width:84px;height:29px"><span class="bt" style="top:7px">P/N</span></div>
<div class="btn" style="left:617px;top:315px;width:127px;height:28px"><span class="bt" style="top:7px">Drive (Warm)</span></div>
<div class="btn" style="left:747px;top:315px;width:127px;height:28px"><span class="bt" style="top:7px">P/N (Warm)</span></div>
<div class="row" style="left:617px;top:353px;width:220px;height:28px"><div class="lab" style="width:152px;height:28px"><span class="bt" style="left:8px;top:7px;letter-spacing:0.5px">Minimum Spark</span></div><div class="val" style="left:151px;width:69px;height:28px"><span class="t" style="right:-0.3px;top:3.5px">14</span></div></div><div class="t unit" style="left:842px;top:359.5px">°</div>
<div class="row" style="left:617px;top:386px;width:220px;height:28px"><div class="lab" style="width:152px;height:28px"><span class="bt" style="left:8px;top:7px">Basic Mode Spark</span></div><div class="val" style="left:151px;width:69px;height:28px"><span class="t" style="right:-0.3px;top:3.5px">14</span></div></div><div class="t unit" style="left:842px;top:392.5px">°</div>
<div class="row" style="left:617px;top:419px;width:220px;height:28px"><div class="lab" style="width:152px;height:28px"><span class="bt" style="left:8px;top:7px;letter-spacing:0.15px">MPH Threshold</span></div><div class="val" style="left:151px;width:69px;height:28px"><span class="t" style="right:-0.3px;top:3.5px">16.0</span></div></div><div class="t unit" style="left:842px;top:426px">mph</div>
<div class="row" style="left:617px;top:452px;width:220px;height:28px"><div class="lab" style="width:152px;height:28px"><span class="bt" style="left:8px;top:7px;letter-spacing:-0.1px">RPM Theshold 1</span></div><div class="val" style="left:151px;width:69px;height:28px"><span class="t" style="right:-0.3px;top:3.5px">3,488</span></div></div><div class="t unit" style="left:842px;top:459px">rpm</div>
<div class="row" style="left:617px;top:485px;width:220px;height:28px"><div class="lab" style="width:152px;height:28px"><span class="bt" style="left:8px;top:7px;letter-spacing:-0.08px">RPM Theshold 2</span></div><div class="val" style="left:151px;width:69px;height:28px"><span class="t" style="right:-0.3px;top:3.5px">3,488</span></div></div><div class="t unit" style="left:842px;top:492px">rpm</div>
<div class="row" style="left:617px;top:517px;width:220px;height:28px"><div class="lab" style="width:152px;height:28px"><span class="bt" style="left:8px;top:7px;letter-spacing:-0.55px">MPH Hysteresis</span></div><div class="val" style="left:151px;width:69px;height:28px"><span class="t" style="right:-0.3px;top:3.5px">1.0</span></div></div><div class="t unit" style="left:842px;top:524px">mph</div>
<!-- /CONTENT -->
<!-- HL -->
<svg class="a" style="left:0;top:0;mix-blend-mode:darken" width="1237" height="742">
<path d="M609 414 Q612 411.5 625 411.5 L760 411 Q790 409.5 805 410 Q835 412 841 416 Q844.5 419 844.5 424 L844.5 437 Q844 443.5 837 444 L836 447 Q841 448 841.5 455 L841.5 471 Q841 478 836.5 479 L837 512 L770 511.8 Q700 512.5 640 513 L611 513 Q609.5 500 610 489 L607.5 487 L607 447 Q608.5 444 609 441 Z" fill="#fde23a"/>
</svg>
<svg class="a" style="left:0;top:0" width="1237" height="742">
<path d="M611 427.5 h11" stroke="#fff" stroke-width="1.5" opacity="0.9"/>
<path d="M820 443.5 q8 -1.5 17 0" stroke="#fff" stroke-width="2" opacity="0.9"/>
<path d="M640 445.5 q90 -1 190 0" stroke="#fff" stroke-width="1" opacity="0.5"/>
<path d="M630 498.5 q30 -1.5 60 -1" stroke="#fff" stroke-width="1.2" opacity="0.8"/>
</svg>
<!-- /HL -->
<!-- EXTRA -->
<svg class="a" style="left:0;top:0" width="60" height="260">
<g transform="translate(19.8,128) scale(0.69) translate(-206,-78.3)">
<rect x="219" y="78.5" width="9" height="3.8" rx="1.6" fill="#56606a" stroke="#3a3f44" stroke-width="1"/>
<rect x="222" y="82" width="3" height="3" fill="#4a4f55"/>
<path d="M216.5 84.8 h14 l2 3 v9.6 l-3.5 3.2 h-12 l-3.5 -3 h-1.5 v-9.6 h1.5z" fill="#ffffff" stroke="#505a64" stroke-width="2" stroke-linejoin="round"/>
<path d="M206.5 88.2 h3.6 v9.6 h-3.6z" fill="#3f464d"/>
<path d="M232 87.3 h3.6 v10.2 h-3.6z" fill="#3f464d"/>
<path d="M225.8 87.3 l-5.4 6.5 h3.2 l-2.8 5 l5.6 -6.4 h-3z" fill="#1a1a1a"/>
</g>
</svg>
<div class="a" style="left:0;top:110px;width:5px;height:140px;overflow:hidden">
<div class="t" style="left:-6px;top:118px;font-size:14px;color:#222;position:absolute;top:8px">8</div>
<div class="t" style="left:-5px;top:47px;font-size:14px;color:#1a3a6a">F</div>
<div class="t" style="left:-5px;top:87px;font-size:14px;color:#222">e</div>
<div class="t" style="left:-3px;top:121px;font-size:14px;color:#1a3a6a">t</div>
</div>
<div class="a" style="left:3px;top:46px;width:1.5px;height:2px;background:#7a5a3a"></div>
<div class="a" style="left:3px;top:54px;width:1.5px;height:2px;background:#4a5a8a"></div>
<div class="a" style="left:3px;top:84px;width:1.5px;height:2px;background:#7a5a3a"></div>
<div class="a" style="left:3px;top:91px;width:1.5px;height:2px;background:#4a5a8a"></div>
<!-- /EXTRA -->
<!-- status -->
<div class="a" style="left:17px;top:663px;width:981px;height:65px;background:#f0f0f0;border-left:1px solid #fff;border-top:none"></div>
<div class="a" style="left:19px;top:665px;width:978px;height:63px;background:#efefef;border-top:1px solid #fbfbfb;border-bottom:1px solid #a0a0a0"></div>
<div class="a" style="left:974px;top:666px;width:1px;height:61px;background:#fbfbfb"></div>
<div class="t" style="left:24.5px;top:671.5px;color:#141414;letter-spacing:0.105px">[ECM] 44642 - Idle Spark Drive (Warm): Idle spark table for transmission in drive when the engine has reached operating temperature.</div>
<div class="t" style="left:902px;top:708px;color:#141414;letter-spacing:0.15px">0 to 128 °</div>
<svg class="a" style="left:979px;top:673px" width="12" height="9"><path d="M0.5 8.5 L5.5 1 L10.5 8.5 Z" fill="#a6a6a6"/></svg>
<svg class="a" style="left:979px;top:711px" width="12" height="9"><path d="M0.5 0.5 L5.5 8 L10.5 0.5 Z" fill="#a6a6a6"/></svg>
</body></html>
